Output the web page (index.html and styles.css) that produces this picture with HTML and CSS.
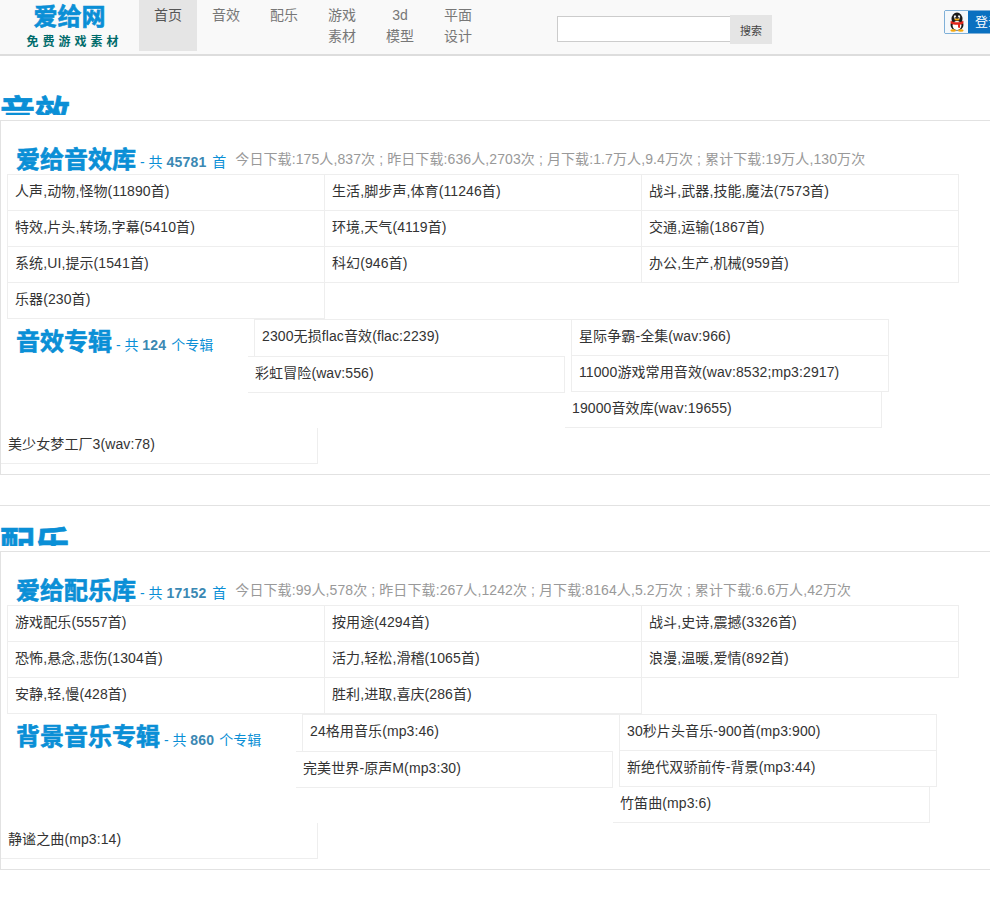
FILE: index.html
```html
<!DOCTYPE html>
<html lang="zh">
<head>
<meta charset="utf-8">
<title>爱给网</title>
<link rel="stylesheet" href="styles.css">
</head>
<body>
<header class="topbar">
  <a class="logo"><span class="logo-name">爱给网</span><span class="logo-sub">免费游戏素材</span></a>
  <nav class="nav">
    <a class="nav-item active">首页</a>
    <a class="nav-item">音效</a>
    <a class="nav-item">配乐</a>
    <a class="nav-item">游戏<br>素材</a>
    <a class="nav-item">3d<br>模型</a>
    <a class="nav-item">平面<br>设计</a>
  </nav>
  <form class="search"><input class="search-input" type="text"><button class="search-btn" type="button">搜索</button></form>
  <a class="qq">
    <span class="qq-icon"><svg width="18" height="20" viewBox="0 0 18 20"><ellipse cx="9" cy="7" rx="5.5" ry="6.5" fill="#1a1a1a"/><ellipse cx="9" cy="13" rx="6.5" ry="5.5" fill="#1a1a1a"/><ellipse cx="9" cy="13.5" rx="4.4" ry="4.6" fill="#fff"/><ellipse cx="7" cy="5" rx="1.2" ry="1.7" fill="#fff"/><ellipse cx="11" cy="5" rx="1.2" ry="1.7" fill="#fff"/><circle cx="7.2" cy="5.3" r=".6" fill="#000"/><circle cx="10.8" cy="5.3" r=".6" fill="#000"/><ellipse cx="9" cy="7.4" rx="2.6" ry="1" fill="#f5a90f"/><path d="M2.6 8.8c4 2 8.800 2 12.800 0v2.800c-1 .6-2.400 1-3.400 1.100v3.300l-2-.4v-2.800c-2.400.2-5.400-.2-7.400-1.300z" fill="#e0261c"/><ellipse cx="5.200" cy="18.500" rx="2.800" ry="1.300" fill="#f5a90f"/><ellipse cx="12.800" cy="18.500" rx="2.800" ry="1.300" fill="#f5a90f"/></svg></span>
    <span class="qq-text">登录</span>
  </a>
</header>

<main>
  <section class="section first">
    <h2 class="section-title">音效</h2>
    <div class="box">
      <div class="lib-head">
        <h3 class="lib-name">爱给音效库</h3>
        <span class="lib-count">- 共 <b>45781</b> 首</span>
        <span class="lib-stats">今日下载:175人,837次 ; 昨日下载:636人,2703次 ; 月下载:1.7万人,9.4万次 ; 累计下载:19万人,130万次</span>
      </div>
      <div class="cats">
        <a class="cat">人声,动物,怪物(11890首)</a>
        <a class="cat">生活,脚步声,体育(11246首)</a>
        <a class="cat">战斗,武器,技能,魔法(7573首)</a>
        <a class="cat">特效,片头,转场,字幕(5410首)</a>
        <a class="cat">环境,天气(4119首)</a>
        <a class="cat">交通,运输(1867首)</a>
        <a class="cat">系统,UI,提示(1541首)</a>
        <a class="cat">科幻(946首)</a>
        <a class="cat">办公,生产,机械(959首)</a>
        <a class="cat">乐器(230首)</a>
      </div>
      <div class="albums">
        <div class="album-head">
          <h3 class="lib-name">音效专辑</h3>
          <span class="lib-count">- 共 <b>124</b> 个专辑</span>
        </div>
        <a class="album a">2300无损flac音效(flac:2239)</a>
        <a class="album b">星际争霸-全集(wav:966)</a>
        <a class="album c">彩虹冒险(wav:556)</a>
        <a class="album d">11000游戏常用音效(wav:8532;mp3:2917)</a>
        <a class="album e">19000音效库(wav:19655)</a>
        <a class="album f">美少女梦工厂3(wav:78)</a>
      </div>
    </div>
  </section>

  <section class="section">
    <h2 class="section-title">配乐</h2>
    <div class="box">
      <div class="lib-head">
        <h3 class="lib-name">爱给配乐库</h3>
        <span class="lib-count">- 共 <b>17152</b> 首</span>
        <span class="lib-stats">今日下载:99人,578次 ; 昨日下载:267人,1242次 ; 月下载:8164人,5.2万次 ; 累计下载:6.6万人,42万次</span>
      </div>
      <div class="cats">
        <a class="cat">游戏配乐(5557首)</a>
        <a class="cat">按用途(4294首)</a>
        <a class="cat">战斗,史诗,震撼(3326首)</a>
        <a class="cat">恐怖,悬念,悲伤(1304首)</a>
        <a class="cat">活力,轻松,滑稽(1065首)</a>
        <a class="cat">浪漫,温暖,爱情(892首)</a>
        <a class="cat">安静,轻,慢(428首)</a>
        <a class="cat">胜利,进取,喜庆(286首)</a>
      </div>
      <div class="albums">
        <div class="album-head wide">
          <h3 class="lib-name">背景音乐专辑</h3>
          <span class="lib-count">- 共 <b>860</b> 个专辑</span>
        </div>
        <a class="album a">24格用音乐(mp3:46)</a>
        <a class="album b">30秒片头音乐-900首(mp3:900)</a>
        <a class="album c">完美世界-原声M(mp3:30)</a>
        <a class="album d">新绝代双骄前传-背景(mp3:44)</a>
        <a class="album e">竹笛曲(mp3:6)</a>
        <a class="album f">静谧之曲(mp3:14)</a>
      </div>
    </div>
  </section>
</main>
</body>
</html>
```
FILE: styles.css
```css
* { box-sizing: border-box; }
html, body { margin: 0; padding: 0; overflow-x: hidden; background: #fff; }
body { font-family: "Liberation Sans", "Noto Sans CJK SC", sans-serif; font-size: 14px; color: #333; }
h2, h3 { margin: 0; }

.topbar { display: flex; height: 56px; background: #f9f9f9; border-bottom: 2px solid #ddd; overflow: hidden; }
.logo { width: 139px; flex: none; display: flex; flex-direction: column; align-items: center; padding-left: 6px; }
.logo-name { font-size: 24px; font-weight: 700; line-height: 32px; color: #0a8fd6; -webkit-text-stroke: .6px #0a8fd6; margin: 1px 6px 0 0; }
.logo-sub { font-size: 12px; font-weight: 700; line-height: 14px; letter-spacing: 4px; color: #006b6b; margin-top: 2px; padding-left: 4px; }
.nav { display: flex; height: 51px; flex: none; }
.nav-item { width: 58px; padding-top: 5px; line-height: 21px; text-align: center; color: #777; }
.nav-item.active { background: #e5e5e5; color: #555; }
.search { display: flex; flex: none; align-items: flex-start; margin-left: 70px; padding-top: 15px; }
.search-input { width: 174px; height: 26px; margin-top: 1px; border: 1px solid #ccc; background: #fff; padding: 0; }
.search-btn { width: 42px; height: 29px; margin-left: -1px; border: 0; background: #e5e5e5; color: #444; font: 11px "Liberation Sans", "Noto Sans CJK SC", sans-serif; padding: 0; }
.qq { display: flex; flex: none; width: 80px; height: 24px; margin: 10px 0 0 172px; border: 1px solid #7fb0d8; border-radius: 2px; background: #0a70c0; }
.qq-icon { width: 23px; background: #f4f8fb; display: flex; align-items: center; justify-content: center; }
.qq-text { padding-left: 7px; font-size: 13px; line-height: 22px; color: #fff; }

.section { border-top: 1px solid #e2e2e2; margin-top: 30px; }
.section.first { border-top: 0; margin-top: 19px; }
.section-title { height: 40px; margin-bottom: 5px; overflow: hidden; font-size: 35px; line-height: 40px; font-weight: 700; color: #0a8fd6; padding-top: 19px; -webkit-text-stroke: .7px #0a8fd6; }
.box { border: 1px solid #e2e2e2; border-right: 0; padding-bottom: 10px; }

.lib-head { height: 53px; padding: 25px 0 0 15px; display: flex; align-items: flex-start; white-space: nowrap; }
.lib-head .lib-count { margin: 6px 0 0 4px; line-height: 20px; }
.lib-name { font-size: 24px; line-height: 28px; font-weight: 700; color: #0a8fd6; display: inline; -webkit-text-stroke: .6px #0a8fd6; }
.lib-count { color: #0a8fd6; }
.lib-count b { color: #3b88b3; letter-spacing: .2px; margin-right: 1px; }
.lib-head .lib-count b { margin-right: 2px; }
.lib-stats { color: #999; margin: 3px 0 0 9px; line-height: 20px; letter-spacing: .1px; }

.cats { display: grid; grid-template-columns: repeat(3, 317px); margin-left: 6px; padding-bottom: 1px; }
.cat { height: 37px; margin: 0 -1px -1px 0; border: 1px solid #eee; padding-left: 7px; line-height: 33px; letter-spacing: .1px; }

.albums { display: flow-root; }
.album-head { float: left; width: 247px; height: 80px; padding: 9px 0 0 15px; white-space: nowrap; }
.album-head.wide { width: 295px; }
.album { float: left; width: 318px; height: 37px; border: 1px solid #eee; padding-left: 7px; line-height: 33px; letter-spacing: .1px; }
.album.a { margin-left: 6px; border-bottom: 0; }
.album.b { margin-left: -1px; border-bottom: 0; }
.album.c { width: 317px; border-left: 0; }
.album.d { margin: -1px 0 0 6px; }
.album.e { width: 317px; margin-top: -1px; border-width: 0 1px 1px 0; line-height: 35px; }
.album.f { width: 317px; height: 36px; border-width: 0 1px 1px 0; }
```
